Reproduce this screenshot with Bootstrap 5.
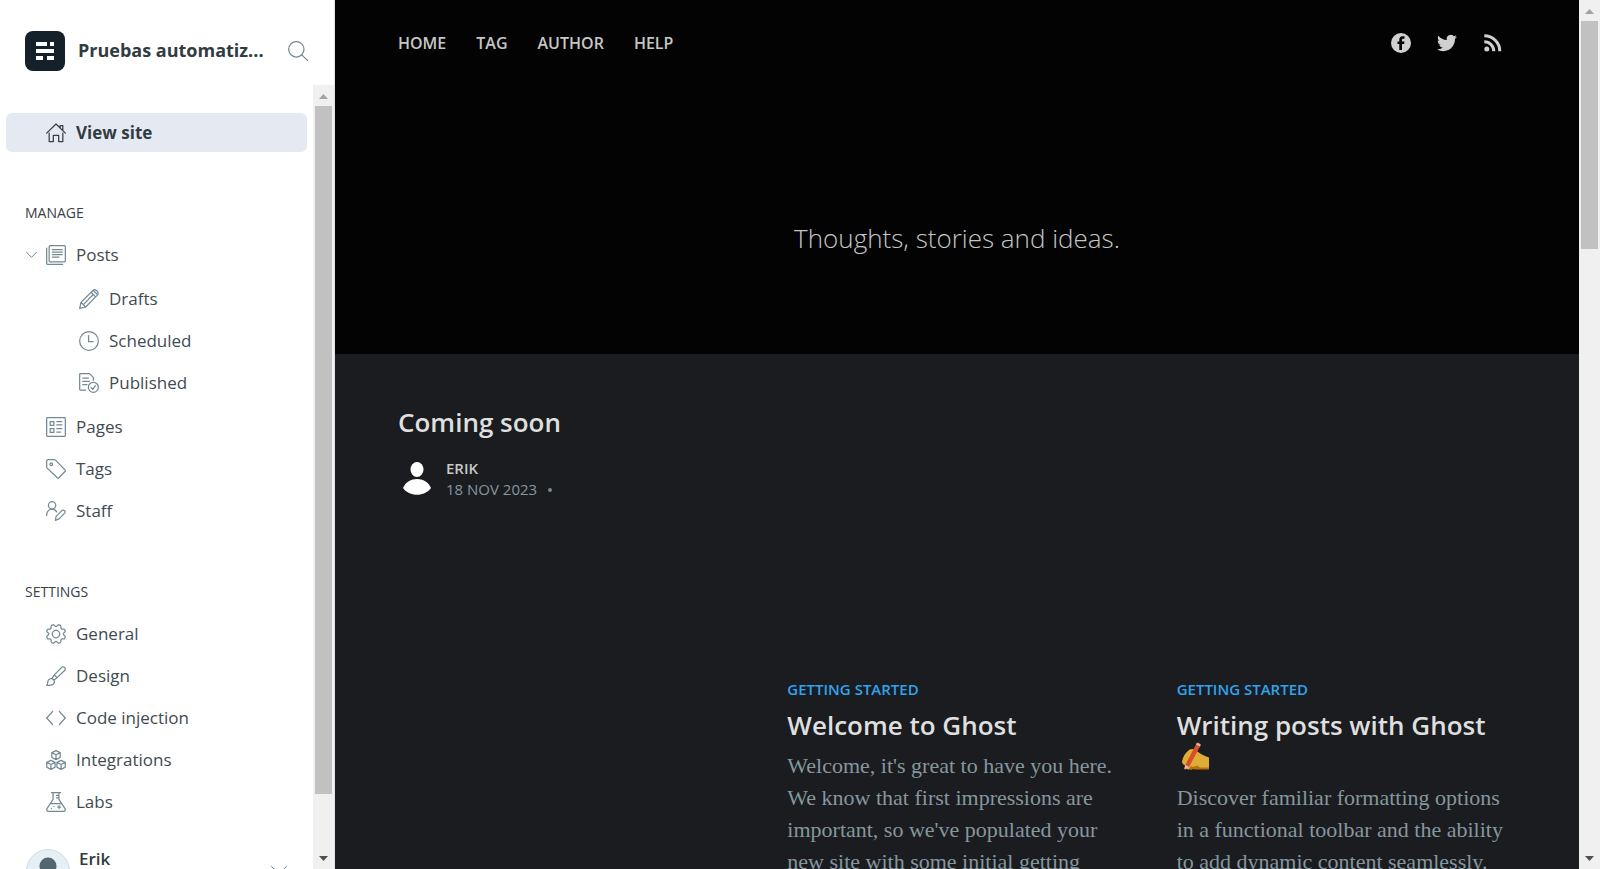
<!DOCTYPE html>
<html lang="en">
<head>
<meta charset="utf-8">
<meta name="viewport" content="width=device-width, initial-scale=1">
<title>Pruebas automatizadas - View site</title>
<link rel="stylesheet" href="https://cdn.jsdelivr.net/npm/bootstrap@5.3.0/dist/css/bootstrap.min.css">
<style>
body{font-family:"Open Sans","Noto Sans",sans-serif;background:#fff;color:#394047}
a{color:inherit;text-decoration:none}
svg{display:block;flex:none}
.ic{fill:none;stroke:#738a94;stroke-width:1.5;stroke-linecap:round;stroke-linejoin:round}
/* sidebar */
.side{width:335px;border-right:1px solid #dfe6ea}
.side-head{height:85px;padding:16px 26px 0 25px}
.site-icon{width:40px;height:40px;border-radius:8px;background:#15212a;margin-right:13px}
.site-name{font-size:18px;font-weight:700;line-height:24px;padding-bottom:2px;color:#303c42}
.plain-btn{border:0;background:none;padding:0}
.side-nav{padding:28px 6px 0}
.side-link{display:flex;align-items:center;gap:10px;height:42px;padding-left:40px;font-size:17px;line-height:24px;color:#3f4b52}
.side-link.active{height:39px;border-radius:6px;background:#e5eaf2;font-weight:700;color:#303c42}
.side-link.active .ic{stroke:#394047}
.side-link.has-toggle{padding-left:20px}
.side-posts{gap:10px}
.toggle-btn{width:11px;margin-right:-1px}
.sub-list{margin:2px 0 2px;padding-left:33px}
.side-title{font-size:14px;font-weight:500;line-height:20px;margin:50px 0 11px;padding-left:19px;color:#394047}
.side-link.active + .side-title{margin-top:51px}
.user-pic{width:44px;height:44px;border-radius:50%;background:#e5eff5;border:1px solid #d3dde3;overflow:hidden}
.user-box{margin-top:26px;padding:0 20px;gap:9px}
.user-name{font-size:17px;font-weight:600;line-height:20px;color:#303c42}
/* scroll bars */
.bar{width:21px;background:#f0f0f0;padding:0 2px}
.bar-end{height:21px;padding-top:2px}
.bar-side .bar-thumb{flex:688 1 0}
.bar-side .bar-rest{flex:54 1 0}
.bar-page .bar-thumb{flex:228 1 0}
.bar-page .bar-rest{flex:599 1 0}
.bar-thumb{background:#c1c1c1}
/* site */
.site{background:#1b1c1f}
.hero{background:#030303;color:#c6c6c6;padding:33px 63px 96px}
.hero-nav{font-size:16px;font-weight:600;line-height:20px;gap:30px}
.tagline{font-size:26px;font-weight:300;line-height:40px;margin:165px 0 0;color:#c6c6c6}
.feed{padding:52px 63px 0}
.feed-row{--bs-gutter-x:50px}
.post-first{min-height:273px}
.post-title{font-size:26px;font-weight:600;line-height:32px;color:#dfdfdf}
.feed-row .post-title{margin:10px 0 9px}
.post-tag{font-size:15px;font-weight:600;line-height:20px;color:#30a3ee}
.post-text{font-family:"Liberation Serif",serif;font-size:22px;line-height:32px;color:#84979f;white-space:nowrap}
.byline{font-size:15px;line-height:21px;gap:8px;color:#84979f;margin-top:20px}
.byline a{font-weight:600;color:#c8c8c8}
.byline .dot{width:4px;height:4px;border-radius:50%;background:#738a94;margin-left:11px}
.social{gap:26px;padding-right:13px}
</style>
</head>
<body>
<div class="d-flex vh-100 overflow-hidden">
  <aside class="side d-flex flex-column flex-shrink-0">
    <header class="side-head d-flex align-items-center flex-shrink-0">
      <span class="site-icon d-flex align-items-center justify-content-center">
        <svg width="18" height="18" viewBox="0 0 18 18" fill="#fff"><path d="M0 0h11v4H0zM14 0h4v4h-4zM0 7h18v4H0zM0 14h7v4H0zM11 14h7v4h-7z"/></svg>
      </span>
      <span class="site-name text-truncate flex-fill">Pruebas automatiz...</span>
      <button class="plain-btn ms-3" type="button" aria-label="Search"><svg class="ic" width="20" height="20" viewBox="0 0 24 24"><circle cx="10" cy="10" r="9.2"/><path d="M16.6 16.6l6.7 6.7"/></svg></button>
    </header>
    <div class="d-flex flex-fill overflow-hidden">
      <nav class="side-nav flex-fill">
        <a class="side-link active" href="#"><svg class="ic" width="20" height="20" viewBox="0 0 24 24"><path d="M.8 12.2L12 1.2l11.2 11M3.8 12v10.2h5v-7.4h6.4v7.4h5V12M17 5.5V3h3.2v6"/></svg>View site</a>

        <h2 class="side-title">MANAGE</h2>
        <div class="side-link has-toggle">
          <button class="plain-btn toggle-btn" type="button" aria-label="Toggle posts"><svg class="ic" width="11" height="8" viewBox="0 0 11 8" style="stroke-width:1"><path d="M.5 1.2l5 5.2 5-5.2"/></svg></button>
          <a class="side-posts d-flex align-items-center flex-fill" href="#"><svg class="ic" width="20" height="20" viewBox="0 0 24 24"><rect x="3.8" y=".8" width="19.4" height="19.4" rx="1.2"/><path d="M.8 3.8v18.4q0 1 1 1H20M7.5 5.5h12M7.5 8.5h12M7.5 11.5h12M7.5 14.5h8"/></svg>Posts</a>
        </div>
        <div class="sub-list">
          <a class="side-link" href="#"><svg class="ic" width="20" height="20" viewBox="0 0 24 24"><path d="M.8 23.2l1.6-7.2L16.6 1.8q2.2-2 4.600.2l.8.8q2 2.300 0 4.500L8 21.600zM2.400 16L8 21.600M14.500 3.900L20 9.500M17 1.500l5.500 5.500M17.200 6.600L5.200 18.800"/></svg>Drafts</a>
          <a class="side-link" href="#"><svg class="ic" width="20" height="20" viewBox="0 0 24 24"><circle cx="12" cy="12" r="11.200"/><path d="M11.500 5.500v7.200h5.500"/></svg>Scheduled</a>
          <a class="side-link" href="#"><svg class="ic" width="20" height="20" viewBox="0 0 24 24"><path d="M8 20.500H1.800q-1 0-1-1V1.800q0-1 1-1h10.700l4.700 4.500v3.500M4.500 6h7M4.500 10h8M4.500 14h5"/><circle cx="17.200" cy="17.200" r="6"/><path d="M14.500 17.500l2 2 3.300-4.300"/></svg>Published</a>
        </div>
        <a class="side-link" href="#"><svg class="ic" width="20" height="20" viewBox="0 0 24 24"><rect x=".8" y=".8" width="22.400" height="22.400" rx="1"/><path d="M5 5.500h4.500V10H5zM5 14h4.500v4.500H5zM13 5.500h6M13 9.500h6M13 14h6M13 18h4.500"/></svg>Pages</a>
        <a class="side-link" href="#"><svg class="ic" width="20" height="20" viewBox="0 0 24 24"><path d="M.8 2.300q0-1.500 1.500-1.500H10q.8 0 1.400.600L22.800 13q1 1 0 2L15.500 22.500q-1 1-2 0L1.400 11Q.8 10.400.8 9.600z"/><circle cx="6.300" cy="6.300" r="1.600"/></svg>Tags</a>
        <a class="side-link" href="#"><svg class="ic" width="20" height="20" viewBox="0 0 24 24"><circle cx="7.300" cy="5.200" r="4.400"/><path d="M.8 17.500c0-5 3-7.900 6.500-7.900 2.300 0 4.400 1.200 5.600 3.400M11.300 23.200l.8-4.700 7-7q1.500-1.300 3 0t.3 3l-6.700 7z"/></svg>Staff</a>

        <h2 class="side-title">SETTINGS</h2>
        <a class="side-link" href="#"><svg class="ic" width="20" height="20" viewBox="0 0 24 24"><path d="M12 3.200C13.500 3.200 14 .8 15.500 .9L17.500 1.700C18.600 2.600 17.300 4.700 18.300 5.700S21.400 5.400 22.300 6.500L23.100 8.500C23.200 10 20.800 10.500 20.800 12S23.200 14 23.100 15.500L22.300 17.500C21.400 18.600 19.300 17.300 18.300 18.300S18.600 21.400 17.500 22.300L15.500 23.100C14 23.200 13.500 20.800 12 20.800S10 23.200 8.500 23.100L6.500 22.300C5.400 21.400 6.700 19.300 5.700 18.300S2.600 18.600 1.700 17.500L.9 15.500C.8 14 3.200 13.500 3.200 12S.8 10 .9 8.500L1.700 6.500C2.600 5.400 4.700 6.700 5.700 5.700S5.400 2.600 6.500 1.700L8.500 .9C10 .8 10.500 3.200 12 3.200z"/><circle cx="12" cy="12" r="4.500"/></svg>General</a>
        <a class="side-link" href="#"><svg class="ic" width="20" height="20" viewBox="0 0 24 24"><path d="M.8 23.200c2-1.500.5-4 2.200-6.600 1.500-2 4.400-2 6-.4s1.500 4.200-.2 5.600C6.500 23.600 3.500 23.200.8 23.200zM7 15.200l3-4.500 3.300 3.300-4 3M10 10.700L18.800 1.600q1.600-1.300 3.300 0t.5 3.500L13.300 14"/></svg>Design</a>
        <a class="side-link" href="#"><svg class="ic" width="20" height="20" viewBox="0 0 24 24"><path d="M8 4L.8 12 8 20M16 4l7.200 8L16 20"/></svg>Code injection</a>
        <a class="side-link" href="#"><svg class="ic" width="20" height="20" viewBox="0 0 24 24"><path id="cube" d="M12 .8l5 2.400v5.800l-5 2.500-5-2.500V3.200zM7 3.200l5 2.500 5-2.500M12 5.700v5.800"/><use href="#cube" x="-6.100" y="11.700"/><use href="#cube" x="6.100" y="11.700"/></svg>Integrations</a>
        <a class="side-link" href="#"><svg class="ic" width="20" height="20" viewBox="0 0 24 24"><path d="M6.500.8h11M8.500.8v8L1.200 20q-1.200 3.200 2 3.200h17.600q3.200 0 2-3.200L15.500 8.800v-8M5 14h14M12.500 4h3M12.500 7h3M14 18h3.500M15.700 16.300v3.500M9.500 17.200h.2M6.500 19.700h.2"/></svg>Labs</a>

        <div class="user-box d-flex">
          <span class="user-pic"><svg width="42" height="42" viewBox="0 0 42 42" fill="#53666f"><circle cx="21" cy="16" r="8.500"/><path d="M5 42c0-22 32-22 32 0z"/></svg></span>
          <span class="user-name flex-fill">Erik</span>
          <button class="plain-btn align-self-start mt-3" type="button" aria-label="Account menu"><svg class="ic" width="16" height="10" viewBox="0 0 16 10" style="stroke-width:1"><path d="M.5 1.500l7.500 7 7.500-7"/></svg></button>
        </div>
      </nav>
      <div class="bar bar-side d-flex flex-column flex-shrink-0">
        <div class="bar-end d-flex align-items-center justify-content-center"><svg width="9" height="5" fill="#a3a3a3"><path d="M4.500 0L9 5H0z"/></svg></div>
        <div class="bar-thumb"></div><div class="bar-rest"></div>
        <div class="bar-end d-flex align-items-center justify-content-center pt-0"><svg width="9" height="5" fill="#505050"><path d="M0 0h9L4.500 5z"/></svg></div>
      </div>
    </div>
  </aside>

  <main class="site flex-fill overflow-hidden">
    <header class="hero">
      <nav class="hero-nav d-flex align-items-center">
        <a href="#">HOME</a><a href="#">TAG</a><a href="#">AUTHOR</a><a href="#">HELP</a>
        <span class="social d-flex align-items-center ms-auto">
          <a href="#" aria-label="Facebook"><svg width="20" height="20" viewBox="0 0 20 20"><circle cx="10" cy="10" r="10" fill="#d0d0d0"/><path fill="#030303" d="M8.300 17v-6H6.500V8.500h1.800V6.600C8.300 4.500 9.500 3.200 11.500 3.200h2v2.500h-1.300c-.8 0-1.200.4-1.200 1.100v1.700h2.500L13.100 11H11v6z"/></svg></a>
          <a href="#" aria-label="Twitter"><svg width="20" height="20" viewBox="0 0 24 24" fill="#d0d0d0"><path d="M23.950 4.570a10 10 0 0 1-2.820.770 4.960 4.960 0 0 0 2.160-2.720c-.95.560-2 .96-3.130 1.180a4.920 4.920 0 0 0-8.380 4.480C7.690 8.100 4.070 6.130 1.640 3.160a4.820 4.820 0 0 0-.67 2.480c0 1.710.87 3.210 2.190 4.100a4.900 4.900 0 0 1-2.230-.62v.06a4.920 4.920 0 0 0 3.950 4.830 5 5 0 0 1-2.210.08 4.940 4.940 0 0 0 4.600 3.420A9.870 9.870 0 0 1 0 19.540a14 14 0 0 0 7.550 2.210c9.050 0 14-7.500 14-13.980 0-.21 0-.42-.02-.63a9.940 9.940 0 0 0 2.460-2.550z"/></svg></a>
          <a href="#" aria-label="RSS"><svg width="20" height="20" viewBox="0 0 20 20" fill="none" stroke="#d0d0d0" stroke-width="3"><circle cx="3.800" cy="16" r="2.500" fill="#d0d0d0" stroke="none"/><path d="M1.300 8.700a9.500 9.500 0 0 1 9.500 9.500M1.300 2.700a15.500 15.500 0 0 1 15.500 15.500"/></svg></a>
        </span>
      </nav>
      <p class="tagline text-center">Thoughts, stories and ideas.</p>
    </header>

    <div class="feed">
      <article class="post-first">
        <h2 class="post-title m-0"><a href="#">Coming soon</a></h2>
        <div class="byline d-flex">
          <svg width="40" height="40" viewBox="0 0 40 40" fill="#fff"><ellipse cx="19" cy="11.500" rx="6.500" ry="7.500"/><path d="M5 30C10 18 28 18 33 30C27 39 11 39 5 30z"/></svg>
          <div><a class="d-block" href="#">ERIK</a><div class="d-flex align-items-center"><time datetime="2023-11-18">18 NOV 2023</time><span class="dot"></span></div></div>
        </div>
      </article>
      <div class="row feed-row">
        <article class="col-4 offset-4">
          <div class="post-tag">GETTING STARTED</div>
          <h2 class="post-title"><a href="#">Welcome to Ghost</a></h2>
          <p class="post-text">Welcome, it's great to have you here.<br>We know that first impressions are<br>important, so we've populated your<br>new site with some initial getting</p>
        </article>
        <article class="col-4">
          <div class="post-tag">GETTING STARTED</div>
          <h2 class="post-title"><a href="#">Writing posts with Ghost
            <svg class="ms-1" width="30" height="32" viewBox="0 0 30 32" role="img" aria-label="Writing hand"><path fill="#dfac36" d="M1 20.500Q2 14 8 9q3-2 6 0l6 4q4 2 8 3.500V27.500H12l-5 1q-3-1-3-4-3-1-3-4z"/><path fill="#b9700f" d="M8 28l2-3 2 1 4-1.500 3 2h9v2H15l-3-.5-2 1z"/><path fill="#d94d2b" d="M15.500 2.500q1-1.500 2.500-.8 2 .8 1.500 2.800L8 26l-3.800-2z"/><path fill="#c5c2bd" d="M15 3.500l3.900 2 .9-1.800-3.900-2z"/><path fill="#e8b4a4" d="M4.200 23.800L7.900 26 4 28.500q-1-.5-.7-1z"/></svg></a></h2>
          <p class="post-text">Discover familiar formatting options<br>in a functional toolbar and the ability<br>to add dynamic content seamlessly.</p>
        </article>
      </div>
    </div>
  </main>
  <div class="bar bar-page d-flex flex-column flex-shrink-0">
    <div class="bar-end d-flex align-items-center justify-content-center"><svg width="9" height="5" fill="#a3a3a3"><path d="M4.500 0L9 5H0z"/></svg></div>
    <div class="bar-thumb"></div><div class="bar-rest"></div>
    <div class="bar-end d-flex align-items-center justify-content-center pt-0"><svg width="9" height="5" fill="#505050"><path d="M0 0h9L4.500 5z"/></svg></div>
  </div>
</div>
<script src="https://cdn.jsdelivr.net/npm/bootstrap@5.3.0/dist/js/bootstrap.bundle.min.js"></script>
</body>
</html>
